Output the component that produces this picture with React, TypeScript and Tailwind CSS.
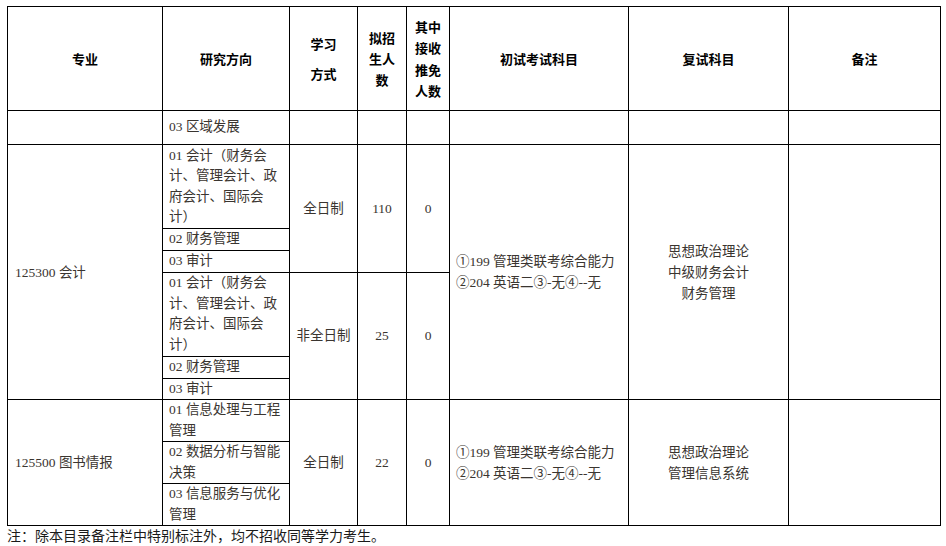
import React from "react";

const SERIF = { fontFamily: '"Liberation Serif", "Noto Sans CJK SC", serif' };
const HEI = { fontFamily: '"Noto Sans CJK SC", "Liberation Sans", sans-serif' };

const td = "border border-black align-middle p-0";
const txt = "text-[13.5px] leading-[21px] text-[#3a3530]";

function Th({ children }: { children: React.ReactNode }) {
  return (
    <th className={`${td} text-center font-bold text-[13px] text-black`} style={HEI}>
      {children}
    </th>
  );
}

function Sub({ lines, h }: { lines: string[]; h: number }) {
  return (
    <td className={`${td} pl-[6px] text-left`} style={{ height: h }}>
      <div className="text-[13.5px] leading-[20.5px] text-[#3a3530]" style={SERIF}>
        {lines.map((l, i) => (
          <div key={i}>{l}</div>
        ))}
      </div>
    </td>
  );
}

function Center({ children, rows }: { children: React.ReactNode; rows: number }) {
  return (
    <td rowSpan={rows} className={`${td} text-center ${txt}`} style={SERIF}>
      {children}
    </td>
  );
}

const accountingDirs = ["01 会计（财务会", "计、管理会计、政", "府会计、国际会", "计）"];

export default function App() {
  return (
    <div className="w-[946px] h-[546px] bg-white overflow-hidden pt-[6px] pl-[7px]">
      <table className="border-collapse table-fixed w-[933px]">
        <colgroup>
          <col className="w-[155px]" />
          <col className="w-[127px]" />
          <col className="w-[68px]" />
          <col className="w-[49px]" />
          <col className="w-[43px]" />
          <col className="w-[179px]" />
          <col className="w-[160px]" />
          <col className="w-[152px]" />
        </colgroup>
        <tbody>
          <tr className="h-[104px]">
            <Th>专业</Th>
            <Th>研究方向</Th>
            <Th>
              <div className="leading-[30px]">
                学习
                <br />
                方式
              </div>
            </Th>
            <Th>
              <div className="leading-[21px]">
                拟招
                <br />
                生人
                <br />数
              </div>
            </Th>
            <Th>
              <div className="leading-[21.5px]">
                其中
                <br />
                接收
                <br />
                推免
                <br />
                人数
              </div>
            </Th>
            <Th>初试考试科目</Th>
            <Th>复试科目</Th>
            <Th>备注</Th>
          </tr>
          <tr>
            <td className={td}></td>
            <Sub lines={["03 区域发展"]} h={34} />
            <td className={td}></td>
            <td className={td}></td>
            <td className={td}></td>
            <td className={td}></td>
            <td className={td}></td>
            <td className={td}></td>
          </tr>

          <tr>
            <td rowSpan={6} className={`${td} pl-[7px] ${txt}`} style={SERIF}>
              125300 会计
            </td>
            <Sub lines={accountingDirs} h={84} />
            <Center rows={3}>全日制</Center>
            <Center rows={3}>110</Center>
            <Center rows={3}>0</Center>
            <td rowSpan={6} className={`${td} pl-[6px] ${txt}`} style={SERIF}>
              <div>①199 管理类联考综合能力</div>
              <div>②204 英语二③-无④--无</div>
            </td>
            <td rowSpan={6} className={`${td} text-center ${txt}`} style={SERIF}>
              <div>思想政治理论</div>
              <div>中级财务会计</div>
              <div>财务管理</div>
            </td>
            <td rowSpan={6} className={td}></td>
          </tr>
          <tr>
            <Sub lines={["02 财务管理"]} h={22} />
          </tr>
          <tr>
            <Sub lines={["03 审计"]} h={21} />
          </tr>
          <tr>
            <Sub lines={accountingDirs} h={84} />
            <Center rows={3}>非全日制</Center>
            <Center rows={3}>25</Center>
            <Center rows={3}>0</Center>
          </tr>
          <tr>
            <Sub lines={["02 财务管理"]} h={22} />
          </tr>
          <tr>
            <Sub lines={["03 审计"]} h={21} />
          </tr>

          <tr>
            <td rowSpan={3} className={`${td} pl-[7px] ${txt}`} style={SERIF}>
              125500 图书情报
            </td>
            <Sub lines={["01 信息处理与工程", "管理"]} h={42} />
            <Center rows={3}>全日制</Center>
            <Center rows={3}>22</Center>
            <Center rows={3}>0</Center>
            <td rowSpan={3} className={`${td} pl-[6px] ${txt}`} style={SERIF}>
              <div>①199 管理类联考综合能力</div>
              <div>②204 英语二③-无④--无</div>
            </td>
            <td rowSpan={3} className={`${td} text-center ${txt}`} style={SERIF}>
              <div>思想政治理论</div>
              <div>管理信息系统</div>
            </td>
            <td rowSpan={3} className={td}></td>
          </tr>
          <tr>
            <Sub lines={["02 数据分析与智能", "决策"]} h={42} />
          </tr>
          <tr>
            <Sub lines={["03 信息服务与优化", "管理"]} h={42} />
          </tr>
        </tbody>
      </table>
      <div className="text-[14px] leading-[19px] text-[#1a1a1a]" style={HEI}>
        注：除本目录备注栏中特别标注外，均不招收同等学力考生。
      </div>
    </div>
  );
}
